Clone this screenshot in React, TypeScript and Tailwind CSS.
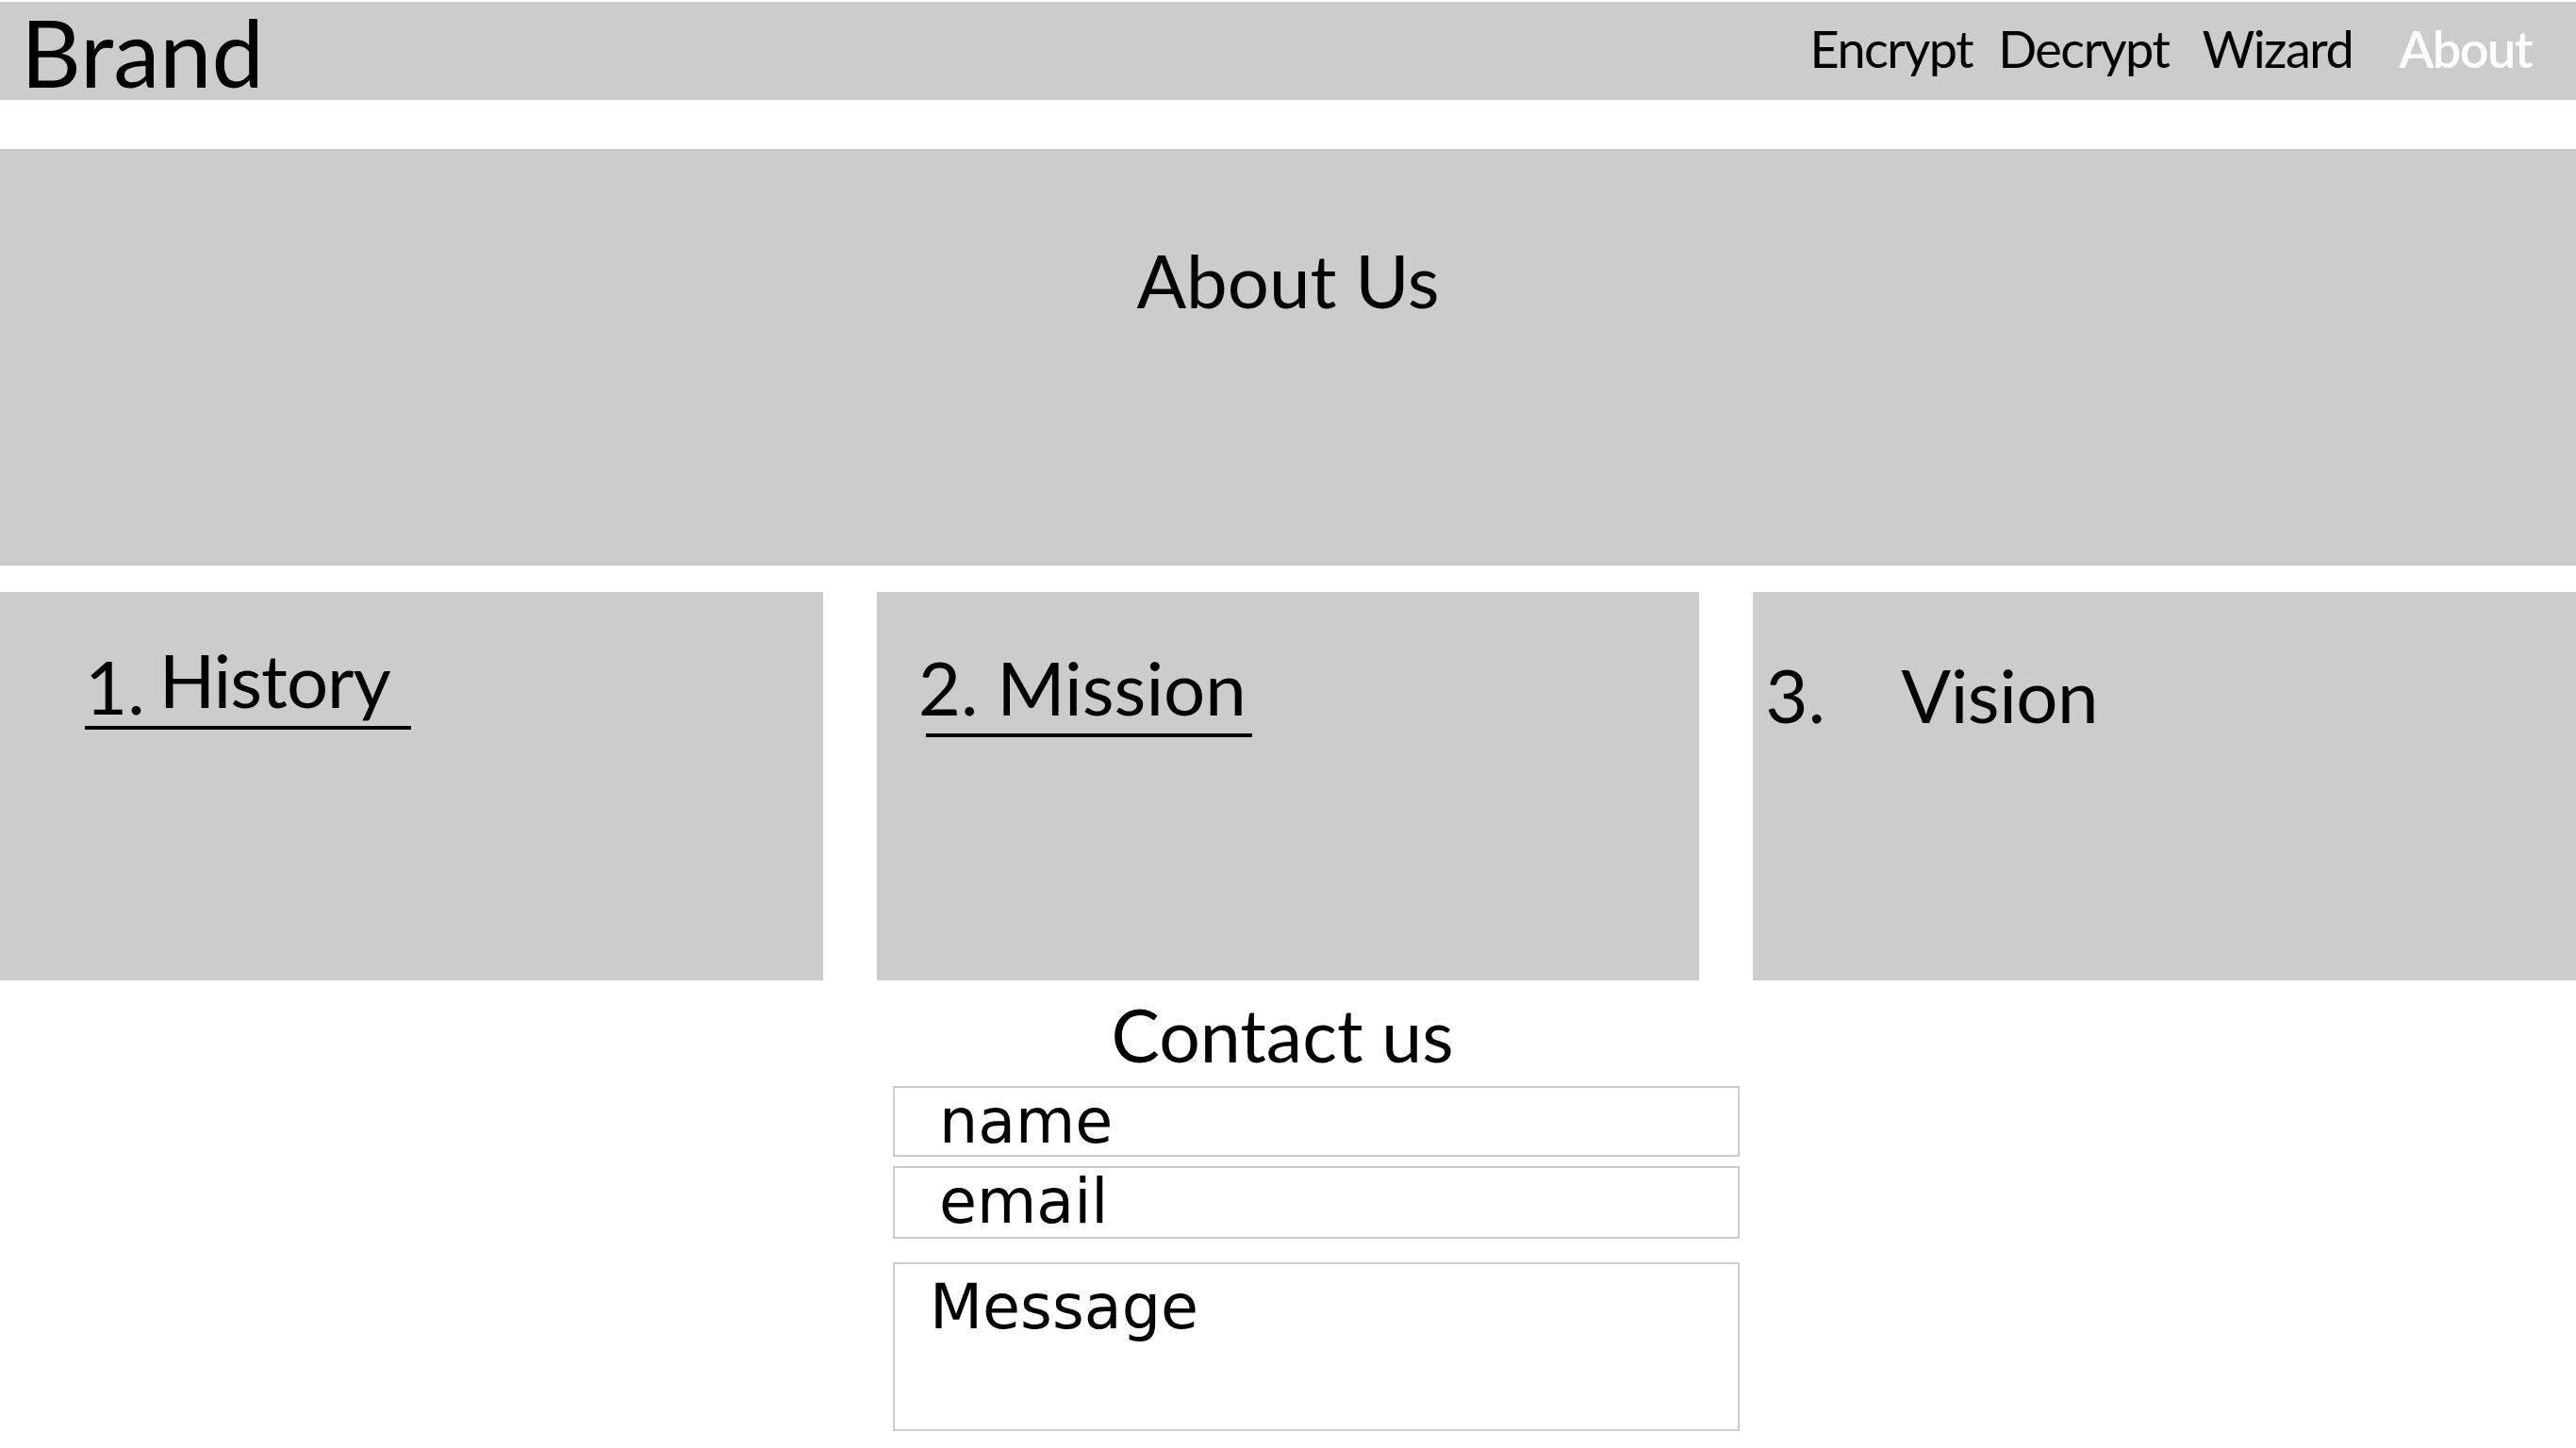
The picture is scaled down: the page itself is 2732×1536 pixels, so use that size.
export default function App() {
  return (
    <div className="min-h-screen w-full bg-white font-['Lato',sans-serif] text-black pt-[2px]">
      {/* Header */}
      <header className="h-[104px] bg-[#cccccc] flex items-start">
        <div className="mt-[3px] pl-[22px] text-[99px] leading-none">Brand</div>
        <nav className="ml-auto mt-[23px] pr-[47px] flex items-start text-[54px] leading-none tracking-[-1.5px]">
          <a>Encrypt</a>
          <a className="ml-[27px]">Decrypt</a>
          <a className="ml-[35px]">Wizard</a>
          <a className="ml-[49px] text-white font-semibold">About</a>
        </nav>
      </header>

      {/* Hero */}
      <section className="mt-[52px] h-[442px] bg-[#cccccc] pt-[100px]">
        <h1 className="text-center text-[78px] leading-none">About Us</h1>
      </section>

      {/* Cards */}
      <section className="mt-[28px] grid grid-cols-3 gap-[57px]">
        <div className="h-[412px] bg-[#cccccc] pt-[54px] pl-[90px]">
          <h2 className="flex items-start text-[78px] leading-none whitespace-nowrap">
            <span className="translate-y-[7px]">1.</span>
            <span className="ml-[15px] tracking-[-1px]">History</span>
          </h2>
          <div className="mt-[10px] h-[4px] w-[346px] bg-black" />
        </div>
        <div className="h-[412px] bg-[#cccccc] pt-[62px] pl-[44px]">
          <h2 className="text-[78px] leading-none whitespace-nowrap">2. Mission</h2>
          <div className="mt-[10px] ml-[8px] h-[4px] w-[346px] bg-black" />
        </div>
        <div className="h-[412px] bg-[#cccccc] pt-[70px] pl-[13px]">
          <h2 className="flex text-[78px] leading-none whitespace-nowrap">
            <span className="w-[144px]">3.</span>
            <span className="tracking-[-0.5px]">Vision</span>
          </h2>
        </div>
      </section>

      {/* Contact */}
      <section className="pt-[19px] pb-[18px]">
        <h2 className="text-center pr-[12px] text-[77px] leading-none">Contact us</h2>
        <form className="mt-[16px] ml-[947px] w-[898px] flex flex-col font-['DejaVu_Sans',sans-serif] text-[65px] leading-none">
          <div className="h-[75px] border-2 border-[#cccccc] pl-[47px] pt-[3px]">name</div>
          <div className="mt-[10px] h-[77px] border-2 border-[#cccccc] pl-[47px] pt-[3px]">email</div>
          <div className="mt-[25px] h-[179px] border-2 border-[#cccccc] pl-[37px] pt-[13px]">Message</div>
        </form>
      </section>
    </div>
  )
}
